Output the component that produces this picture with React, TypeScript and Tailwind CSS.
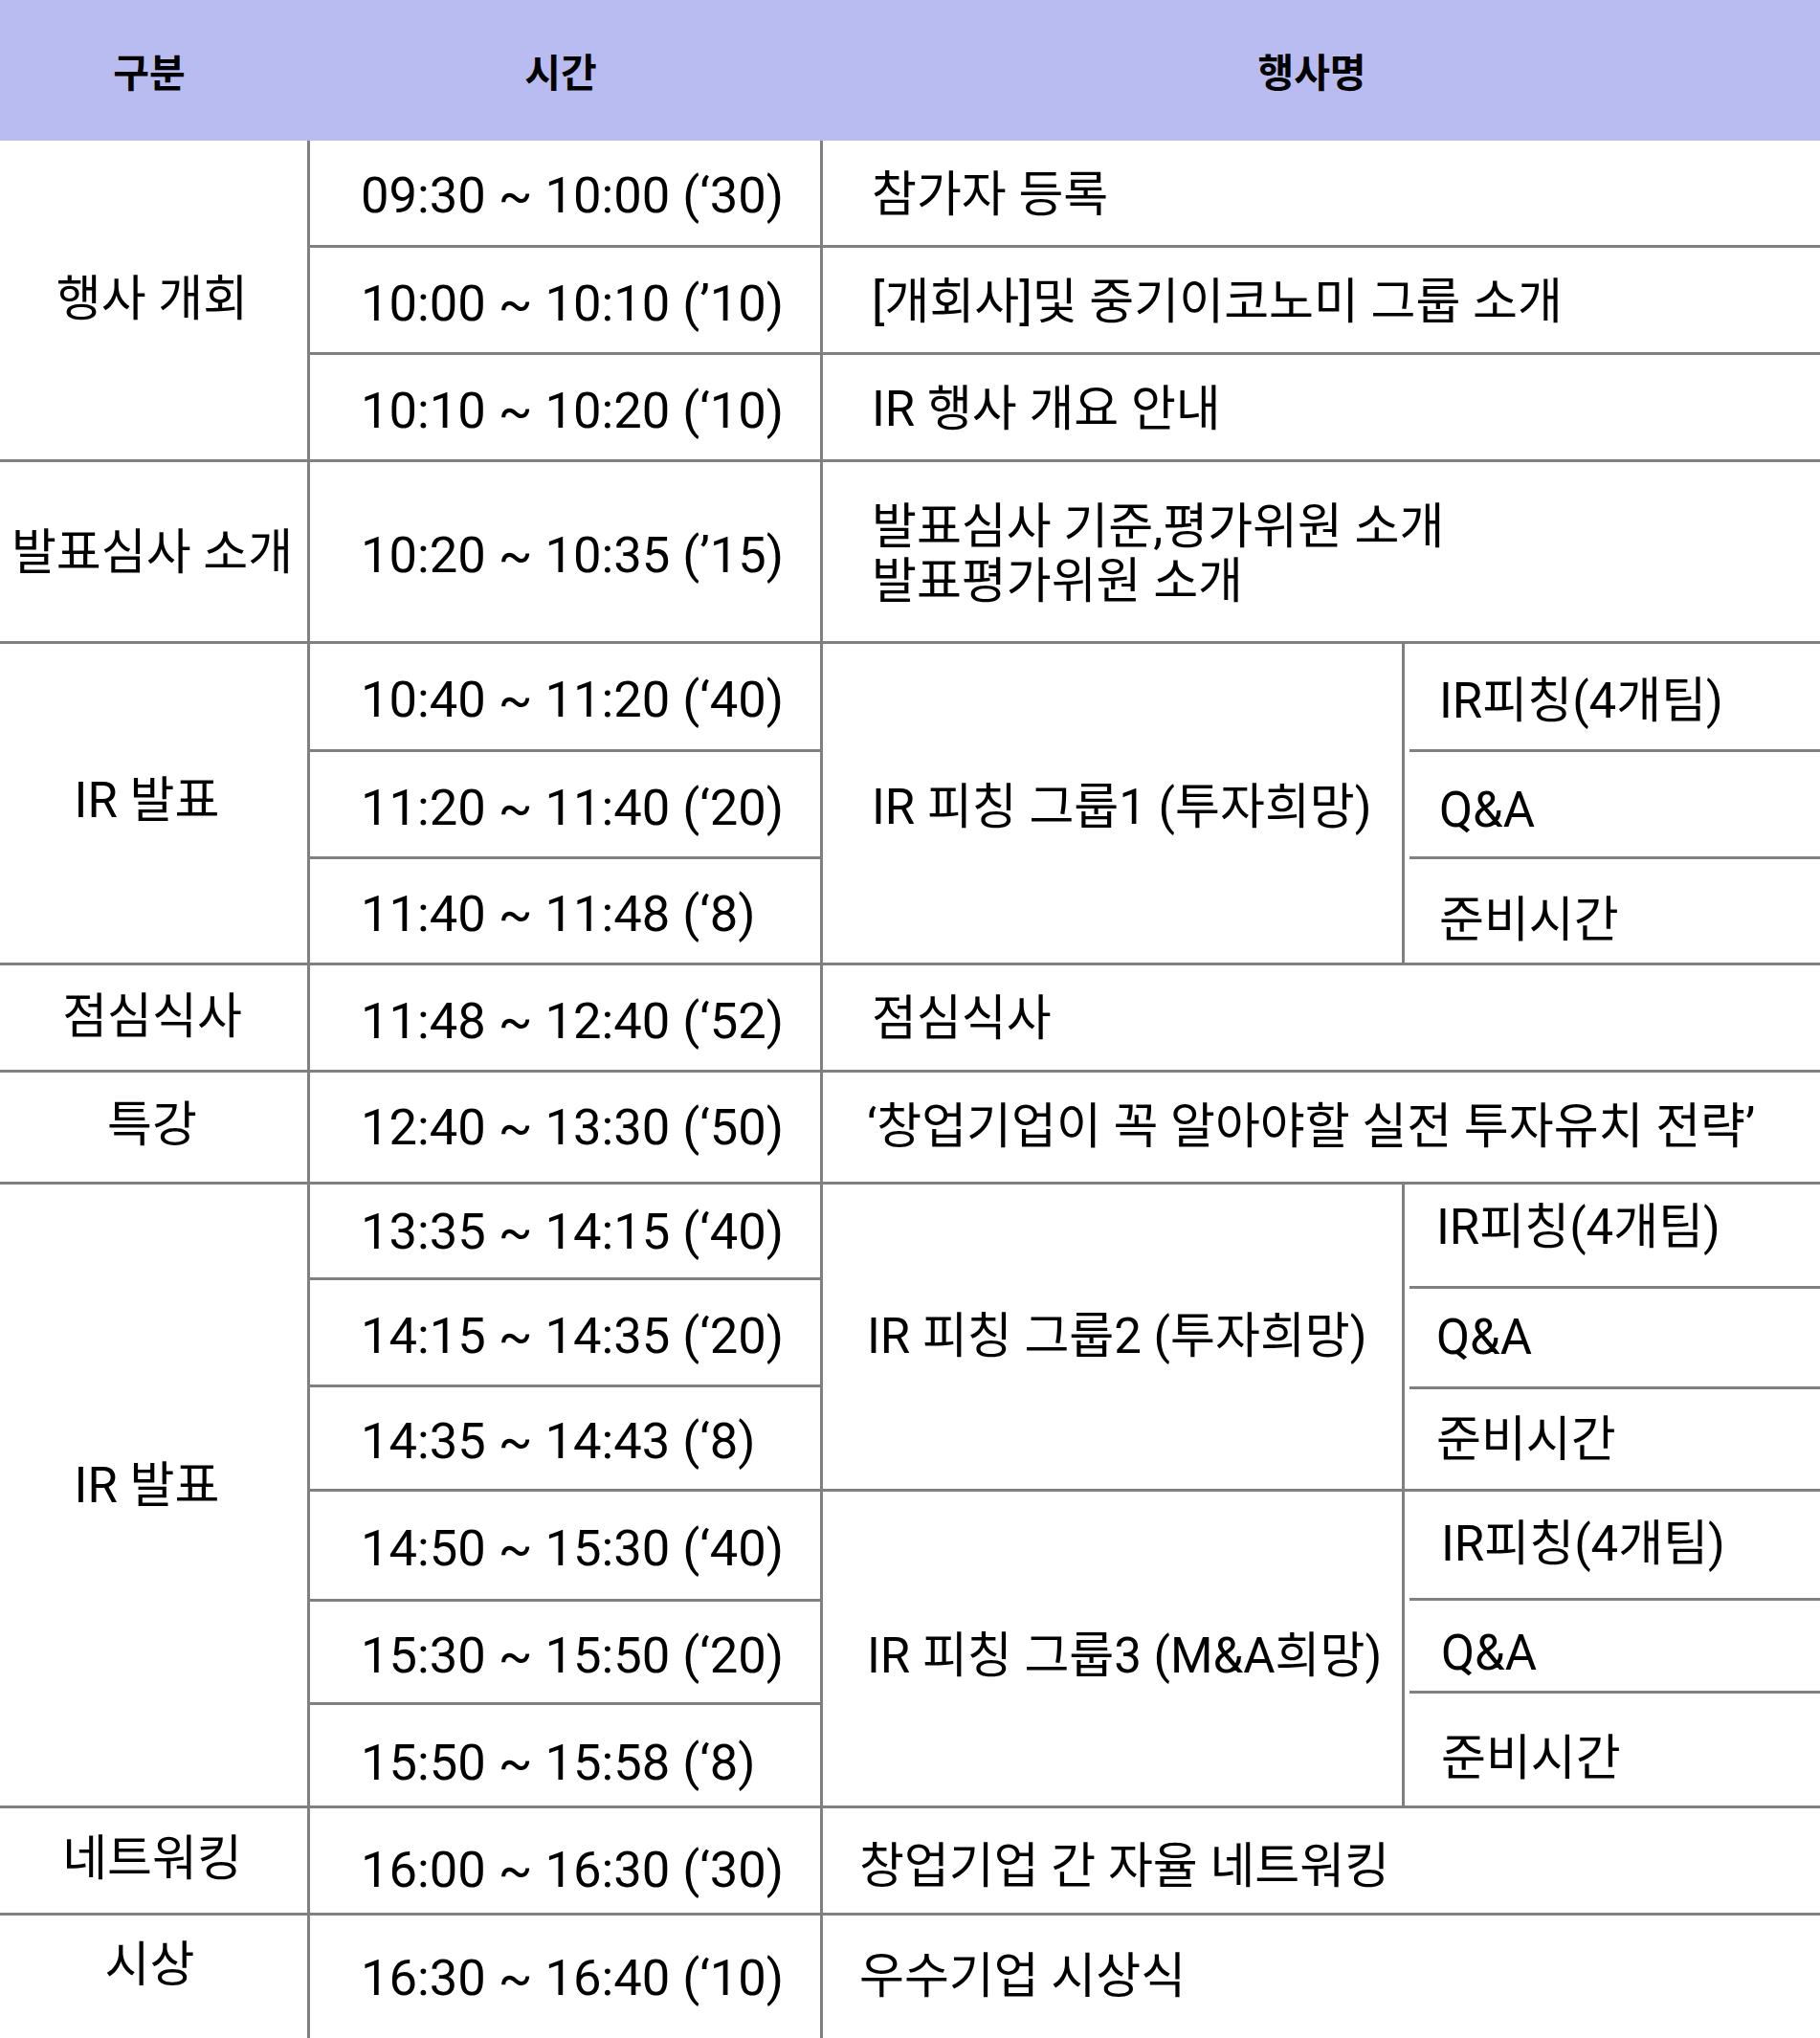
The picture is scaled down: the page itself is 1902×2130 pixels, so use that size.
import React from "react";

const B = "border-[#808080]";

function TimeCell({ t, h, last, extra }: { t: string; h: string; last?: boolean; extra?: string }) {
  return (
    <div
      className={`${h} ${last ? "" : "border-b-[3px] border-[#808080]"} flex items-center pl-[53px] text-[52.5px] leading-none ${extra ?? "pt-[7px]"}`}
    >
      {t}
    </div>
  );
}

function SubCell({ t, h, line, cls }: { t: string; h: string; line?: boolean; cls: string }) {
  return (
    <div className={`${h} flex flex-col`}>
      <div className={`flex-1 flex items-center ${cls}`}>{t}</div>
      {line ? <div className="ml-[5px] h-[3px] bg-[#808080]" /> : null}
    </div>
  );
}

export default function App() {
  return (
    <div className="w-[1902px] min-h-[2130px] bg-white text-black font-['Roboto','Noto_Sans_CJK_KR',sans-serif] text-[51px]">
      {/* header */}
      <div className="flex h-[147px] bg-[#b9bcf1] text-[41px] font-bold font-['Noto_Sans_CJK_KR',sans-serif]">
        <div className="w-[312px] flex items-center justify-center">구분</div>
        <div className="w-[548px] flex items-center justify-center">시간</div>
        <div className="flex-1 flex items-center justify-center pr-[20px]">행사명</div>
      </div>

      {/* S1 행사 개회 */}
      <div className={`flex border-b-[3px] ${B}`}>
        <div className={`w-[324px] shrink-0 border-r-[3px] ${B} flex items-center justify-center pr-[3px]`}>행사 개회</div>
        <div className={`w-[536px] shrink-0 border-r-[3px] ${B} flex flex-col`}>
          <TimeCell t="09:30 ~ 10:00 (‘30)" h="h-[112px]" extra="pt-[6px]" />
          <TimeCell t="10:00 ~ 10:10 (’10)" h="h-[112px]" />
          <TimeCell t="10:10 ~ 10:20 (‘10)" h="h-[109px]" last />
        </div>
        <div className="flex-1 flex flex-col">
          <div className={`h-[112px] border-b-[3px] ${B} flex items-center pl-[51px] pt-[5px]`}>참가자 등록</div>
          <div className={`h-[112px] border-b-[3px] ${B} flex items-center pl-[51px] pt-[5px]`}>[개회사]및 중기이코노미 그룹 소개</div>
          <div className="h-[109px] flex items-center pl-[51px] pt-[6px]">IR 행사 개요 안내</div>
        </div>
      </div>

      {/* S2 발표심사 소개 */}
      <div className={`flex border-b-[3px] ${B}`}>
        <div className={`w-[324px] shrink-0 border-r-[3px] ${B} flex items-center justify-center pr-[3px] pt-[4px]`}>발표심사 소개</div>
        <div className={`w-[536px] shrink-0 border-r-[3px] ${B} flex flex-col`}>
          <TimeCell t="10:20 ~ 10:35 (’15)" h="h-[187px]" last />
        </div>
        <div className="flex-1 flex flex-col justify-center pl-[51px] leading-[57px] pt-[4px]">
          <div>발표심사 기준,평가위원 소개</div>
          <div>발표평가위원 소개</div>
        </div>
      </div>

      {/* S3 IR 발표 1 */}
      <div className={`flex border-b-[3px] ${B}`}>
        <div className={`w-[324px] shrink-0 border-r-[3px] ${B} flex items-center justify-center pr-[14px] pb-[4px]`}>IR 발표</div>
        <div className={`w-[536px] shrink-0 border-r-[3px] ${B} flex flex-col`}>
          <TimeCell t="10:40 ~ 11:20 (‘40)" h="h-[113px]" />
          <TimeCell t="11:20 ~ 11:40 (‘20)" h="h-[112px]" />
          <TimeCell t="11:40 ~ 11:48 (‘8)" h="h-[108px]" last />
        </div>
        <div className="flex-1 flex">
          <div className={`w-[608px] shrink-0 border-r-[3px] ${B} flex items-center pl-[51px] pt-[10px]`}>IR 피칭 그룹1 (투자희망)</div>
          <div className="flex-1 flex flex-col">
            <SubCell t="IR피칭(4개팀)" h="h-[113px]" line cls="pl-[36px] pt-[10px]" />
            <SubCell t="Q&A" h="h-[112px]" line cls="pl-[36px] pt-[14px]" />
            <SubCell t="준비시간" h="h-[108px]" cls="pl-[36px] pt-[20px]" />
          </div>
        </div>
      </div>

      {/* S4 점심식사 */}
      <div className={`flex border-b-[3px] ${B}`}>
        <div className={`w-[324px] shrink-0 border-r-[3px] ${B} flex items-center justify-center pr-[3px]`}>점심식사</div>
        <div className={`w-[536px] shrink-0 border-r-[3px] ${B} flex flex-col`}>
          <TimeCell t="11:48 ~ 12:40 (‘52)" h="h-[109px]" last />
        </div>
        <div className="flex-1 flex items-center pl-[51px] pt-[4px]">점심식사</div>
      </div>

      {/* S5 특강 */}
      <div className={`flex border-b-[3px] ${B}`}>
        <div className={`w-[324px] shrink-0 border-r-[3px] ${B} flex items-center justify-center pr-[3px] pb-[4px]`}>특강</div>
        <div className={`w-[536px] shrink-0 border-r-[3px] ${B} flex flex-col`}>
          <TimeCell t="12:40 ~ 13:30 (‘50)" h="h-[114px]" last extra="pt-[0px]" />
        </div>
        <div className="flex-1 flex items-center pl-[46px]">‘창업기업이 꼭 알아야할 실전 투자유치 전략’</div>
      </div>

      {/* S6 IR 발표 2,3 */}
      <div className={`flex border-b-[3px] ${B}`}>
        <div className={`w-[324px] shrink-0 border-r-[3px] ${B} flex items-center justify-center pr-[14px] pb-[18px]`}>IR 발표</div>
        <div className={`w-[536px] shrink-0 border-r-[3px] ${B} flex flex-col`}>
          <TimeCell t="13:35 ~ 14:15 (‘40)" h="h-[100px]" extra="pt-[2px]" />
          <TimeCell t="14:15 ~ 14:35 (‘20)" h="h-[112px]" />
          <TimeCell t="14:35 ~ 14:43 (‘8)" h="h-[109px]" />
          <TimeCell t="14:50 ~ 15:30 (‘40)" h="h-[115px]" />
          <TimeCell t="15:30 ~ 15:50 (‘20)" h="h-[108px]" />
          <TimeCell t="15:50 ~ 15:58 (‘8)" h="h-[105px]" last extra="pt-[16px]" />
        </div>
        <div className="flex-1 flex flex-col">
          <div className={`h-[321px] flex border-b-[3px] ${B}`}>
            <div className={`w-[608px] shrink-0 border-r-[3px] ${B} flex items-center pl-[46px]`}>IR 피칭 그룹2 (투자희망)</div>
            <div className="flex-1 flex flex-col">
              <SubCell t="IR피칭(4개팀)" h="h-[109px]" line cls="pl-[33px] pb-[16px]" />
              <SubCell t="Q&A" h="h-[105px]" line cls="pl-[33px]" />
              <SubCell t="준비시간" h="h-[104px]" cls="pl-[33px] pt-[2px]" />
            </div>
          </div>
          <div className="flex-1 flex">
            <div className={`w-[608px] shrink-0 border-r-[3px] ${B} flex items-center pl-[46px] pt-[16px]`}>IR 피칭 그룹3 (M&amp;A희망)</div>
            <div className="flex-1 flex flex-col">
              <SubCell t="IR피칭(4개팀)" h="h-[114px]" line cls="pl-[38px]" />
              <SubCell t="Q&A" h="h-[97px]" line cls="pl-[38px] pt-[16px]" />
              <SubCell t="준비시간" h="h-[117px]" cls="pl-[38px] pt-[20px]" />
            </div>
          </div>
        </div>
      </div>

      {/* S7 네트워킹 */}
      <div className={`flex border-b-[3px] ${B}`}>
        <div className={`w-[324px] shrink-0 border-r-[3px] ${B} flex items-center justify-center pr-[3px] pb-[2px]`}>네트워킹</div>
        <div className={`w-[536px] shrink-0 border-r-[3px] ${B} flex flex-col`}>
          <TimeCell t="16:00 ~ 16:30 (‘30)" h="h-[109px]" last extra="pt-[20px]" />
        </div>
        <div className="flex-1 flex items-center pl-[38px] pt-[14px]">창업기업 간 자율 네트워킹</div>
      </div>

      {/* S8 시상 */}
      <div className="flex">
        <div className={`w-[324px] shrink-0 border-r-[3px] ${B} flex items-center justify-center pr-[8px] pb-[24px]`}>시상</div>
        <div className={`w-[536px] shrink-0 border-r-[3px] ${B} flex flex-col`}>
          <TimeCell t="16:30 ~ 16:40 (‘10)" h="h-[128px]" last extra="pt-[2px]" />
        </div>
        <div className="flex-1 flex items-center pl-[38px]">우수기업 시상식</div>
      </div>
    </div>
  );
}
